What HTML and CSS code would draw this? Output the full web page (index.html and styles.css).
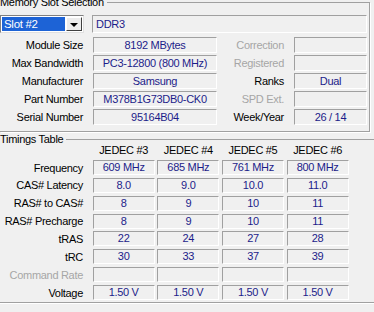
FILE: index.html
```html
<!DOCTYPE html>
<html lang="en">
<head>
    <meta charset="UTF-8">
    <title>SPD</title>
    <link rel="stylesheet" href="styles.css">
</head>
<body>
<fieldset class="group slot-group">
    <legend>Memory Slot Selection</legend>
    <div class="slot-row">
        <div class="combo">
            <span class="combo-value">Slot #2</span>
            <span class="combo-button"><span class="arrow"></span></span>
        </div>
        <div class="field field-left">DDR3</div>
    </div>
    <div class="info-row">
        <div class="label">Module Size</div>
        <div class="field wide">8192 MBytes</div>
        <div class="label side disabled">Correction</div>
        <div class="field narrow"></div>
    </div>
    <div class="info-row">
        <div class="label">Max Bandwidth</div>
        <div class="field wide">PC3-12800 (800 MHz)</div>
        <div class="label side disabled">Registered</div>
        <div class="field narrow"></div>
    </div>
    <div class="info-row">
        <div class="label">Manufacturer</div>
        <div class="field wide">Samsung</div>
        <div class="label side">Ranks</div>
        <div class="field narrow">Dual</div>
    </div>
    <div class="info-row">
        <div class="label">Part Number</div>
        <div class="field wide">M378B1G73DB0-CK0</div>
        <div class="label side disabled">SPD Ext.</div>
        <div class="field narrow"></div>
    </div>
    <div class="info-row">
        <div class="label">Serial Number</div>
        <div class="field wide">95164B04</div>
        <div class="label side">Week/Year</div>
        <div class="field narrow">26 / 14</div>
    </div>
</fieldset>

<fieldset class="group timings-group">
    <legend>Timings Table</legend>
    <div class="timing-row head">
        <div></div>
        <div>JEDEC #3</div>
        <div>JEDEC #4</div>
        <div>JEDEC #5</div>
        <div>JEDEC #6</div>
    </div>
    <div class="timing-row">
        <div class="label">Frequency</div>
        <div class="field">609 MHz</div>
        <div class="field">685 MHz</div>
        <div class="field">761 MHz</div>
        <div class="field">800 MHz</div>
    </div>
    <div class="timing-row">
        <div class="label">CAS# Latency</div>
        <div class="field">8.0</div>
        <div class="field">9.0</div>
        <div class="field">10.0</div>
        <div class="field">11.0</div>
    </div>
    <div class="timing-row">
        <div class="label">RAS# to CAS#</div>
        <div class="field">8</div>
        <div class="field">9</div>
        <div class="field">10</div>
        <div class="field">11</div>
    </div>
    <div class="timing-row">
        <div class="label">RAS# Precharge</div>
        <div class="field">8</div>
        <div class="field">9</div>
        <div class="field">10</div>
        <div class="field">11</div>
    </div>
    <div class="timing-row">
        <div class="label">tRAS</div>
        <div class="field">22</div>
        <div class="field">24</div>
        <div class="field">27</div>
        <div class="field">28</div>
    </div>
    <div class="timing-row">
        <div class="label">tRC</div>
        <div class="field">30</div>
        <div class="field">33</div>
        <div class="field">37</div>
        <div class="field">39</div>
    </div>
    <div class="timing-row">
        <div class="label disabled">Command Rate</div>
        <div class="field"></div>
        <div class="field"></div>
        <div class="field"></div>
        <div class="field"></div>
    </div>
    <div class="timing-row">
        <div class="label">Voltage</div>
        <div class="field">1.50 V</div>
        <div class="field">1.50 V</div>
        <div class="field">1.50 V</div>
        <div class="field">1.50 V</div>
    </div>
</fieldset>
</body>
</html>
```

FILE: styles.css
```css
* {
    box-sizing: border-box;
}

body {
    margin: 0;
    width: 374px;
    height: 312px;
    overflow: hidden;
    background: #F0F0F0;
    font-family: 'Liberation Sans', Arial, sans-serif;
    font-size: 11px;
    letter-spacing: -0.3px;
    color: #000000;
}

.group {
    margin: 0;
    padding: 0;
    min-width: 0;
    border: none;
    border-top: 1px solid #A0A0A0;
    border-bottom: 1px solid #A0A0A0;
}

.group legend {
    padding: 0 3px 0 0;
    margin-left: 0;
    line-height: 13px;
    background: #F0F0F0;
}

.slot-group {
    margin-top: -4px;
    width: 370px;
    padding-bottom: 4px;
    border-right: 1px solid #A0A0A0;
    box-shadow: 1px 1px 0 #FFFFFF;
}

.timings-group {
    margin-top: 1px;
    width: 390px;
    padding-bottom: 2px;
    box-shadow: 0 1px 0 #FFFFFF;
}

.field {
    height: 16px;
    line-height: 14px;
    border: 1px solid;
    border-color: #A0A0A0 #FFFFFF #FFFFFF #A0A0A0;
    color: #1C1C8A;
    text-align: center;
    white-space: nowrap;
    overflow: hidden;
}

.label {
    text-align: right;
    white-space: nowrap;
}

.disabled {
    color: #A6A6A6;
}

/* slot selector row */
.slot-row {
    display: flex;
    align-items: center;
    margin-top: 6px;
    margin-bottom: 4px;
    margin-right: 2px;
}

.combo {
    display: flex;
    width: 84px;
    height: 18px;
    padding: 1px;
    background: #FFFFFF;
    border: 1px solid;
    border-color: #808080 #E0E0E0 #E0E0E0 #808080;
}

.combo-value {
    width: 64px;
    background: #1D63D6;
    color: #FFFFFF;
    padding-left: 2px;
    line-height: 14px;
    font-size: 11.5px;
}

.combo-button {
    display: flex;
    align-items: center;
    justify-content: center;
    width: 16px;
    margin-left: 1px;
    background: #ECECEC;
    border: 1px solid;
    border-color: #FFFFFF #404040 #404040 #FFFFFF;
}

.arrow {
    width: 0;
    height: 0;
    border-left: 4px solid transparent;
    border-right: 4px solid transparent;
    border-top: 4px solid #000000;
    margin-top: 1px;
}

.slot-row .field {
    flex: 1;
    height: 18px;
    line-height: 16px;
    margin-left: 8px;
}

.field-left {
    text-align: left;
    padding-left: 3px;
}

/* module info rows */
.info-row {
    display: flex;
    align-items: center;
    height: 16px;
    margin-bottom: 2px;
}

.info-row .label {
    width: 93px;
    padding-right: 10px;
}

.info-row .label.side {
    width: 77px;
}

.field.wide {
    width: 124px;
}

.field.narrow {
    width: 73px;
}

/* timings table */
.timing-row {
    display: grid;
    grid-template-columns: 90px repeat(4, 62px);
    column-gap: 2.67px;
    align-items: center;
    height: 15px;
    margin-bottom: 2.86px;
}

.timing-row .label {
    padding-right: 7px;
}

.timing-row .field {
    height: 15px;
    line-height: 12px;
}

.timing-row.head {
    height: 12px;
    line-height: 11px;
    margin-top: -2px;
    margin-bottom: 4px;
    text-align: center;
}

.timing-row:last-child {
    margin-bottom: 0;
}
```
